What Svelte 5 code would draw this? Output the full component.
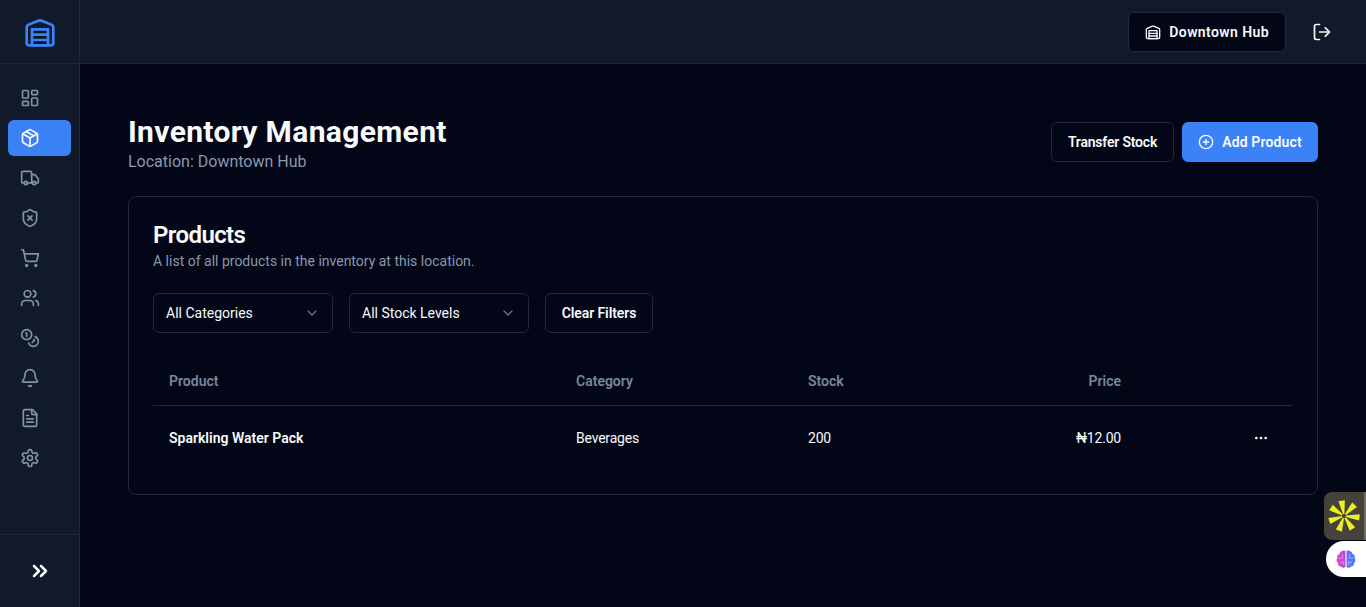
<script>
  const navItems = [
    { name: 'dashboard', body: '<rect x="3" y="3" width="7" height="9" rx="1"/><rect x="14" y="3" width="7" height="5" rx="1"/><rect x="14" y="12" width="7" height="9" rx="1"/><rect x="3" y="16" width="7" height="5" rx="1"/>' },
    { name: 'inventory', active: true, body: '<path d="m7.5 4.27 9 5.15"/><path d="M21 8a2 2 0 0 0-1-1.73l-7-4a2 2 0 0 0-2 0l-7 4A2 2 0 0 0 3 8v8a2 2 0 0 0 1 1.73l7 4a2 2 0 0 0 2 0l7-4A2 2 0 0 0 21 16Z"/><path d="m3.3 7 8.7 5 8.7-5"/><path d="M12 22V12"/>' },
    { name: 'transfers', body: '<path d="M14 18V6a2 2 0 0 0-2-2H4a2 2 0 0 0-2 2v11a1 1 0 0 0 1 1h2"/><path d="M15 18H9"/><path d="M19 18h2a1 1 0 0 0 1-1v-3.65a1 1 0 0 0-.22-.624l-3.48-4.35A1 1 0 0 0 17.52 8H14"/><circle cx="17" cy="18" r="2"/><circle cx="7" cy="18" r="2"/>' },
    { name: 'damages', body: '<path d="M20 13c0 5-3.5 7.5-7.66 8.95a1 1 0 0 1-.67-.01C7.5 20.5 4 18 4 13V6a1 1 0 0 1 1-1c2 0 4.5-1.2 6.24-2.72a1.17 1.17 0 0 1 1.52 0C14.51 3.81 17 5 19 5a1 1 0 0 1 1 1z"/><path d="m14.5 9.5-5 5"/><path d="m9.5 9.5 5 5"/>' },
    { name: 'sales', body: '<circle cx="8" cy="21" r="1"/><circle cx="19" cy="21" r="1"/><path d="M2.05 2.05h2l2.66 12.42a2 2 0 0 0 2 1.58h9.78a2 2 0 0 0 1.95-1.57l1.65-7.43H5.12"/>' },
    { name: 'users', body: '<path d="M16 21v-2a4 4 0 0 0-4-4H6a4 4 0 0 0-4 4v2"/><circle cx="9" cy="7" r="4"/><path d="M22 21v-2a4 4 0 0 0-3-3.87"/><path d="M16 3.13a4 4 0 0 1 0 7.75"/>' },
    { name: 'finance', body: '<circle cx="8" cy="8" r="6"/><path d="M18.09 10.37A6 6 0 1 1 10.34 18"/><path d="M7 6h1v4"/><path d="m16.71 13.88.7.71-2.82 2.82"/>' },
    { name: 'alerts', body: '<path d="M10.268 21a2 2 0 0 0 3.464 0"/><path d="M3.262 15.326A1 1 0 0 0 4 17h16a1 1 0 0 0 .74-1.673C19.41 13.956 18 12.499 18 8A6 6 0 0 0 6 8c0 4.499-1.411 5.956-2.738 7.326"/>' },
    { name: 'reports', body: '<path d="M15 2H6a2 2 0 0 0-2 2v16a2 2 0 0 0 2 2h12a2 2 0 0 0 2-2V7Z"/><path d="M14 2v4a2 2 0 0 0 2 2h4"/><path d="M10 9H8"/><path d="M16 13H8"/><path d="M16 17H8"/>' },
    { name: 'settings', body: '<path d="M12.22 2h-.44a2 2 0 0 0-2 2v.18a2 2 0 0 1-1 1.73l-.43.25a2 2 0 0 1-2 0l-.15-.08a2 2 0 0 0-2.73.73l-.22.38a2 2 0 0 0 .73 2.73l.15.1a2 2 0 0 1 1 1.72v.51a2 2 0 0 1-1 1.74l-.15.09a2 2 0 0 0-.73 2.73l.22.38a2 2 0 0 0 2.73.73l.15-.08a2 2 0 0 1 2 0l.43.25a2 2 0 0 1 1 1.73V20a2 2 0 0 0 2 2h.44a2 2 0 0 0 2-2v-.18a2 2 0 0 1 1-1.73l.43-.25a2 2 0 0 1 2 0l.15.08a2 2 0 0 0 2.73-.73l.22-.39a2 2 0 0 0-.73-2.73l-.15-.08a2 2 0 0 1-1-1.74v-.5a2 2 0 0 1 1-1.74l.15-.09a2 2 0 0 0 .73-2.73l-.22-.38a2 2 0 0 0-2.73-.73l-.15.08a2 2 0 0 1-2 0l-.43-.25a2 2 0 0 1-1-1.73V4a2 2 0 0 0-2-2z"/><circle cx="12" cy="12" r="3"/>' }
  ];

  const warehouse = '<path d="M22 8.35V20a2 2 0 0 1-2 2H4a2 2 0 0 1-2-2V8.35A2 2 0 0 1 3.26 6.5l8-3.2a2 2 0 0 1 1.48 0l8 3.2A2 2 0 0 1 22 8.35Z"/><path d="M6 18h12"/><path d="M6 14h12"/><rect x="6" y="10" width="12" height="12"/>';
  const chevronDown = '<path d="m6 9 6 6 6-6"/>';
</script>

{#snippet icon(body, size = 20, stroke = 2)}
  <svg class="icon" width={size} height={size} viewBox="0 0 24 24" fill="none" stroke="currentColor" stroke-width={stroke} stroke-linecap="round" stroke-linejoin="round">{@html body}</svg>
{/snippet}

<div class="shell">
  <aside class="sidebar">
    <div class="logo">{@render icon(warehouse, 32)}</div>
    <nav class="nav">
      {#each navItems as item}
        <a class="nav-item" class:active={item.active} href="#{item.name}" aria-label={item.name}>
          {@render icon(item.body)}
        </a>
      {/each}
    </nav>
    <div class="collapse">
      {@render icon('<path d="m6 17 5-5-5-5"/><path d="m13 17 5-5-5-5"/>', 24, 2.5)}
    </div>
  </aside>

  <div class="content">
    <header class="topbar">
      <button class="btn location">
        {@render icon(warehouse, 16)}
        Downtown Hub
      </button>
      <button class="logout" aria-label="Log out">
        {@render icon('<path d="M9 21H5a2 2 0 0 1-2-2V5a2 2 0 0 1 2-2h4"/><polyline points="16 17 21 12 16 7"/><line x1="21" y1="12" x2="9" y2="12"/>')}
      </button>
    </header>

    <main class="main">
      <div class="page-head">
        <div>
          <h1>Inventory Management</h1>
          <p class="location-line">Location: Downtown Hub</p>
        </div>
        <div class="actions">
          <button class="btn transfer">Transfer Stock</button>
          <button class="btn primary">
            {@render icon('<circle cx="12" cy="12" r="10"/><path d="M8 12h8"/><path d="M12 8v8"/>', 16)}
            Add Product
          </button>
        </div>
      </div>

      <section class="card">
        <h2>Products</h2>
        <p class="card-desc">A list of all products in the inventory at this location.</p>

        <div class="filters">
          <div class="select">
            All Categories
            {@render icon(chevronDown, 16)}
          </div>
          <div class="select">
            All Stock Levels
            {@render icon(chevronDown, 16)}
          </div>
          <button class="btn clear">Clear Filters</button>
        </div>

        <div class="table">
          <div class="row head">
            <div>Product</div>
            <div>Category</div>
            <div>Stock</div>
            <div class="right">Price</div>
            <div></div>
          </div>
          <div class="row">
            <div class="name">Sparkling Water Pack</div>
            <div class="tight">Beverages</div>
            <div class="tight">200</div>
            <div class="right tight">₦12.00</div>
            <div class="more">
              {@render icon('<circle cx="12" cy="12" r="1"/><circle cx="19" cy="12" r="1"/><circle cx="5" cy="12" r="1"/>', 16)}
            </div>
          </div>
        </div>
      </section>
    </main>
  </div>

  <div class="widget spark">
    <svg width="32" height="32" viewBox="0 0 32 32" fill="#ecf01e">
      {#each [-8, 44, 96, 148, 200, 252, 304] as deg}
        <polygon points="12.500,0.500 19,0.500 16.700,14 15.300,14" transform="rotate({deg} 16 16)" />
      {/each}
    </svg>
  </div>
  <div class="widget brain">
    <svg width="22" height="22" viewBox="0 0 24 24" fill="none">
      <defs>
        <linearGradient id="brain-fill" x1="0" y1="0" x2="1" y2="0">
          <stop offset="0.1" stop-color="#ec3cc8" />
          <stop offset="0.5" stop-color="#8f5cf2" />
          <stop offset="0.9" stop-color="#3a86f7" />
        </linearGradient>
      </defs>
      <path fill="url(#brain-fill)" d="M11.400 3.200v17.600c-1.400 1.300-4 1-4.900-.7-2 .1-3.600-1.600-3.100-3.600C1.500 15.300 1.200 12.600 2.500 11 1.800 8.900 3 6.800 5 6.500 5.300 4.200 9.300 2 11.400 3.200zM12.600 3.200c2.100-1.200 6.100 1 6.400 3.300 2 .3 3.200 2.400 2.500 4.500 1.300 1.600 1 4.300-.9 5.500.5 2-1.100 3.700-3.100 3.600-.9 1.700-3.500 2-4.900.7z" />
      <path stroke="#fff" stroke-width="0.8" stroke-linecap="round" stroke-opacity="0.55" d="M4 11h4.500M8 7v3M6 15.500h3M9 15.500v2.500M20 11h-4.500M16 7v3M18 15.500h-3M15 15.500v2.500" />
    </svg>
  </div>
</div>

<style>
  :global(body) {
    margin: 0;
    background: #020617;
  }

  .shell {
    display: flex;
    height: 607px;
    overflow: hidden;
    position: relative;
    background: #020617;
    color: #f8fafc;
    font-family: Roboto, "Open Sans", sans-serif;
    font-size: 14px;
  }

  .icon {
    display: block;
    flex: none;
  }

  .sidebar {
    width: 80px;
    flex: none;
    box-sizing: border-box;
    display: flex;
    flex-direction: column;
    background: #111a2a;
    border-right: 1px solid #1e293b;
  }

  .logo {
    height: 64px;
    box-sizing: border-box;
    border-bottom: 1px solid #1e293b;
    display: flex;
    align-items: center;
    justify-content: center;
    color: #3b82f6;
  }

  .nav {
    flex: 1;
    display: flex;
    flex-direction: column;
    gap: 4px;
    padding: 16px 8px;
  }

  .nav-item {
    height: 36px;
    width: 63px;
    box-sizing: border-box;
    display: flex;
    align-items: center;
    padding-left: 12px;
    border-radius: 6px;
    color: #8492a6;
  }

  .nav-item.active {
    background: #3b82f6;
    color: #f8fafc;
  }

  .collapse {
    height: 73px;
    box-sizing: border-box;
    border-top: 1px solid #1e293b;
    display: flex;
    align-items: center;
    justify-content: center;
    color: #f8fafc;
  }

  .content {
    flex: 1;
    min-width: 0;
    display: flex;
    flex-direction: column;
  }

  .topbar {
    height: 64px;
    box-sizing: border-box;
    border-bottom: 1px solid #1e293b;
    background: #111a2a;
    display: flex;
    align-items: center;
    justify-content: flex-end;
    gap: 16px;
    padding: 0 24px;
  }

  .btn {
    height: 40px;
    box-sizing: border-box;
    display: inline-flex;
    align-items: center;
    justify-content: center;
    gap: 8px;
    padding: 0 16px;
    background: #020617;
    color: #f8fafc;
    border: 1px solid #1e293b;
    border-radius: 6px;
    white-space: nowrap;
    font: 600 14px/20px Roboto, "Open Sans", sans-serif;
  }

  .btn.location {
    letter-spacing: 0.4px;
  }

  .btn.transfer {
    width: 123px;
    padding: 0;
    letter-spacing: -0.2px;
  }

  .btn.clear {
    width: 108px;
    padding: 0;
    letter-spacing: -0.1px;
  }

  .btn.primary {
    width: 136px;
    padding: 0;
    background: #3b82f6;
    border-color: #3b82f6;
    letter-spacing: 0.15px;
  }

  .logout {
    width: 40px;
    height: 40px;
    display: flex;
    align-items: center;
    justify-content: center;
    padding: 0;
    background: none;
    border: 0;
    color: #f8fafc;
  }

  .main {
    flex: 1;
    padding: 48px;
  }

  .page-head {
    display: flex;
    justify-content: space-between;
    align-items: center;
    margin-bottom: 24px;
  }

  h1 {
    margin: 0;
    font-size: 30px;
    line-height: 40px;
    font-weight: 700;
    letter-spacing: 0.35px;
  }

  .location-line {
    margin: 0;
    font-size: 16px;
    line-height: 20px;
    color: #8a99ae;
  }

  .actions {
    display: flex;
    gap: 8px;
  }

  .card {
    border: 1px solid #1e293b;
    border-radius: 8px;
    padding: 24px;
    height: 299px;
    box-sizing: border-box;
  }

  h2 {
    margin: 0;
    font-size: 24px;
    line-height: 28px;
    font-weight: 600;
    letter-spacing: -0.6px;
  }

  .card-desc {
    margin: 2px 0 0;
    font-size: 14px;
    line-height: 20px;
    color: #8a99ae;
  }

  .filters {
    display: flex;
    gap: 16px;
    margin-top: 22px;
  }

  .select {
    width: 180px;
    height: 40px;
    box-sizing: border-box;
    display: flex;
    align-items: center;
    justify-content: space-between;
    padding: 0 12px;
    border: 1px solid #1e293b;
    border-radius: 6px;
  }

  .select .icon {
    color: #94a3b8;
    opacity: 0.7;
  }

  .table {
    margin-top: 24px;
  }

  .row {
    display: grid;
    grid-template-columns: 407px 232px 172px 173px 156px;
    align-items: center;
    height: 64px;
  }

  .row > div {
    padding: 0 16px;
  }

  .row.head {
    height: 49px;
    box-sizing: border-box;
    border-bottom: 1px solid #1e293b;
    color: #77879d;
    font-weight: 600;
  }

  .right {
    text-align: right;
  }

  .tight {
    letter-spacing: -0.2px;
  }

  .name {
    font-weight: 600;
  }

  .more {
    display: flex;
    justify-content: flex-end;
  }

  .more .icon {
    margin-right: 8px;
  }

  .widget {
    position: absolute;
    right: 0;
    display: flex;
    align-items: center;
  }

  .spark {
    top: 492px;
    width: 42px;
    height: 48px;
    box-sizing: border-box;
    padding-left: 4px;
    background: #45413b;
    border-radius: 8px 0 0 8px;
    border-right: 2px solid #6f6c66;
  }

  .brain {
    top: 541px;
    width: 40px;
    height: 36px;
    box-sizing: border-box;
    padding-left: 9px;
    background: #fff;
    border-radius: 18px 0 0 18px;
  }
</style>
